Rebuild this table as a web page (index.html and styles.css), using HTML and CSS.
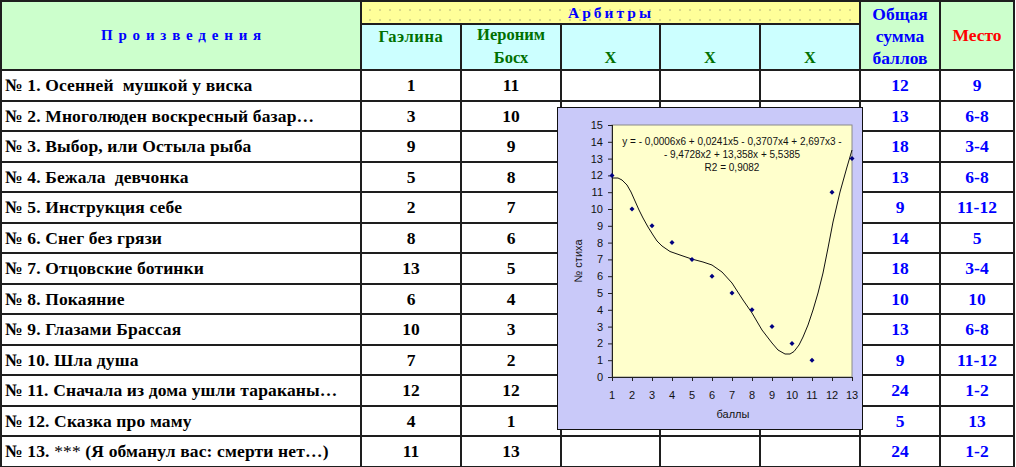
FILE: index.html
```html
<!DOCTYPE html>
<html lang="ru">
<head>
<meta charset="utf-8">
<title>Произведения</title>
<link rel="stylesheet" href="styles.css">
</head>
<body>
<div class="sheet">
  <div class="cell hd-green works">Произведения</div>
  <div class="cell hd-yellow arb">Арбитры</div>
  <div class="cell hd-green total">Общая<br>сумма<br>баллов</div>
  <div class="cell hd-green place">Место</div>
  <div class="cell hd-cyan judge top">Гаэлина</div>
  <div class="cell hd-cyan judge">Иероним<br>Босх</div>
  <div class="cell hd-cyan judge">X</div>
  <div class="cell hd-cyan judge">X</div>
  <div class="cell hd-cyan judge">X</div>

  <div class="cell name">№ 1. Осенней  мушкой у виска</div><div class="cell num">1</div><div class="cell num">11</div><div class="cell"></div><div class="cell"></div><div class="cell"></div><div class="cell blue">12</div><div class="cell blue">9</div>
  <div class="cell name">№ 2. Многолюден воскресный базар…</div><div class="cell num">3</div><div class="cell num">10</div><div class="cell"></div><div class="cell"></div><div class="cell"></div><div class="cell blue">13</div><div class="cell blue">6-8</div>
  <div class="cell name">№ 3. Выбор, или Остыла рыба</div><div class="cell num">9</div><div class="cell num">9</div><div class="cell"></div><div class="cell"></div><div class="cell"></div><div class="cell blue">18</div><div class="cell blue">3-4</div>
  <div class="cell name">№ 4. Бежала  девчонка</div><div class="cell num">5</div><div class="cell num">8</div><div class="cell"></div><div class="cell"></div><div class="cell"></div><div class="cell blue">13</div><div class="cell blue">6-8</div>
  <div class="cell name">№ 5. Инструкция себе</div><div class="cell num">2</div><div class="cell num">7</div><div class="cell"></div><div class="cell"></div><div class="cell"></div><div class="cell blue">9</div><div class="cell blue">11-12</div>
  <div class="cell name">№ 6. Снег без грязи</div><div class="cell num">8</div><div class="cell num">6</div><div class="cell"></div><div class="cell"></div><div class="cell"></div><div class="cell blue">14</div><div class="cell blue">5</div>
  <div class="cell name">№ 7. Отцовские ботинки</div><div class="cell num">13</div><div class="cell num">5</div><div class="cell"></div><div class="cell"></div><div class="cell"></div><div class="cell blue">18</div><div class="cell blue">3-4</div>
  <div class="cell name">№ 8. Покаяние</div><div class="cell num">6</div><div class="cell num">4</div><div class="cell"></div><div class="cell"></div><div class="cell"></div><div class="cell blue">10</div><div class="cell blue">10</div>
  <div class="cell name">№ 9. Глазами Брассая</div><div class="cell num">10</div><div class="cell num">3</div><div class="cell"></div><div class="cell"></div><div class="cell"></div><div class="cell blue">13</div><div class="cell blue">6-8</div>
  <div class="cell name">№ 10. Шла душа</div><div class="cell num">7</div><div class="cell num">2</div><div class="cell"></div><div class="cell"></div><div class="cell"></div><div class="cell blue">9</div><div class="cell blue">11-12</div>
  <div class="cell name">№ 11. Сначала из дома ушли тараканы…</div><div class="cell num">12</div><div class="cell num">12</div><div class="cell"></div><div class="cell"></div><div class="cell"></div><div class="cell blue">24</div><div class="cell blue">1-2</div>
  <div class="cell name">№ 12. Сказка про маму</div><div class="cell num">4</div><div class="cell num">1</div><div class="cell"></div><div class="cell"></div><div class="cell"></div><div class="cell blue">5</div><div class="cell blue">13</div>
  <div class="cell name">№ 13. <span class="light">***</span> (Я обманул вас: смерти нет…)</div><div class="cell num">11</div><div class="cell num">13</div><div class="cell"></div><div class="cell"></div><div class="cell"></div><div class="cell blue">24</div><div class="cell blue">1-2</div>

  <div class="chart">
    <svg width="306" height="323" viewBox="0 0 306 323" xmlns="http://www.w3.org/2000/svg">
      <rect x="0.5" y="0.5" width="305" height="322" fill="#c9c9f9" stroke="#111"/>
      <rect x="55" y="18" width="240" height="252" fill="#ffffcc" stroke="#8a8a8a" stroke-width="1"/>
      <g stroke="#222" stroke-width="1" fill="none">
        <path d="M55.5 18 V270.5 H295"/>
        <path d="M51 270.5h4M51 253.7h4M51 236.9h4M51 220.1h4M51 203.3h4M51 186.5h4M51 169.7h4M51 152.9h4M51 136.1h4M51 119.3h4M51 102.5h4M51 85.7h4M51 68.9h4M51 52.1h4M51 35.3h4M51 18.5h4"/>
        <path d="M55.5 270v4M75.5 270v4M95.5 270v4M115.5 270v4M135.5 270v4M155.5 270v4M175.5 270v4M195.5 270v4M215.5 270v4M235.5 270v4M255.5 270v4M275.5 270v4M295.5 270v4"/>
      </g>
      <g class="ax" text-anchor="end">
        <text x="46" y="274">0</text><text x="46" y="257.2">1</text><text x="46" y="240.4">2</text><text x="46" y="223.6">3</text><text x="46" y="206.8">4</text><text x="46" y="190">5</text><text x="46" y="173.2">6</text><text x="46" y="156.4">7</text><text x="46" y="139.6">8</text><text x="46" y="122.8">9</text><text x="46" y="106">10</text><text x="46" y="89.2">11</text><text x="46" y="72.4">12</text><text x="46" y="55.6">13</text><text x="46" y="38.8">14</text><text x="46" y="22">15</text>
      </g>
      <g class="ax" text-anchor="middle">
        <text x="55" y="292">1</text><text x="75" y="292">2</text><text x="95" y="292">3</text><text x="115" y="292">4</text><text x="135" y="292">5</text><text x="155" y="292">6</text><text x="175" y="292">7</text><text x="195" y="292">8</text><text x="215" y="292">9</text><text x="235" y="292">10</text><text x="255" y="292">11</text><text x="275" y="292">12</text><text x="295" y="292">13</text>
        <text x="176" y="311">баллы</text>
        <text transform="translate(25 154) rotate(-90)">№ стиха</text>
      </g>
      <g class="eq" text-anchor="middle">
        <text x="175" y="38" xml:space="preserve">y = - 0,0006x6 + 0,0241x5 - 0,3707x4 + 2,697x3 -</text>
        <text x="175" y="51" xml:space="preserve">- 9,4728x2 + 13,358x + 5,5385</text>
        <text x="175" y="64">R2 = 0,9082</text>
      </g>
      <polyline fill="none" stroke="#111" stroke-width="1" stroke-linejoin="round" points="55,71 61,71 65,73 70,78 74,85 78,94 82,103 86,111 91,120 96,128 100,134 105,139 113,144.5 123,148 134.7,152 146,155 155,158 165,165 175,176 186,193 195,206 205,223 215,236 221,243 228,247 233,247 237,244.5 242,238 246,230 251,218 256,203 261,186 266,166 271,141 276,115 283,85 290,60 295,43"/>
      <g fill="#000080">
        <path d="M55 65.9l2.5 2.5-2.5 2.5-2.5-2.5z"/>
        <path d="M75 99.5l2.5 2.5-2.5 2.5-2.5-2.5z"/>
        <path d="M95 116.3l2.5 2.5-2.5 2.5-2.5-2.5z"/>
        <path d="M115 133.1l2.5 2.5-2.5 2.5-2.5-2.5z"/>
        <path d="M135 149.9l2.5 2.5-2.5 2.5-2.5-2.5z"/>
        <path d="M155 166.7l2.5 2.5-2.5 2.5-2.5-2.5z"/>
        <path d="M175 183.5l2.5 2.5-2.5 2.5-2.5-2.5z"/>
        <path d="M195 200.3l2.5 2.5-2.5 2.5-2.5-2.5z"/>
        <path d="M215 217.1l2.5 2.5-2.5 2.5-2.5-2.5z"/>
        <path d="M235 233.9l2.5 2.5-2.5 2.5-2.5-2.5z"/>
        <path d="M255 250.7l2.5 2.5-2.5 2.5-2.5-2.5z"/>
        <path d="M275 82.7l2.5 2.5-2.5 2.5-2.5-2.5z"/>
        <path d="M295 49.1l2.5 2.5-2.5 2.5-2.5-2.5z"/>
      </g>
    </svg>
  </div>
</div>
</body>
</html>
```

FILE: styles.css
```css
html, body {
  margin: 0;
  padding: 0;
  background: #ffffff;
}

.sheet {
  position: relative;
  display: grid;
  grid-template-columns: 358px 98px 98px 97px 98px 98px 78px 72px;
  grid-template-rows: 21px 44px 29px 28px 29px 28px 29px 28px 29px 28px 29px 28px 29px 28px 29px;
  gap: 2px;
  padding: 2px;
  width: max-content;
  background: #1e1e1e;
  font-family: "Liberation Serif", "Times New Roman", serif;
  font-weight: bold;
  font-size: 17.5px;
  color: #000;
}

.cell {
  background: #ffffff;
  display: flex;
  align-items: center;
  justify-content: center;
  white-space: pre;
  overflow: hidden;
}

.hd-green {
  background-color: #ccffcc;
}

.hd-yellow {
  background-color: #ffff99;
  background-image: radial-gradient(circle, #d9d98a 0.7px, transparent 1.1px);
  background-size: 10px 10px;
  background-position: 3px 3px;
}

.hd-cyan {
  background-color: #ccffff;
}

.works {
  grid-row: 1 / span 2;
  color: #0000ff;
  font-size: 15px;
  letter-spacing: 5.8px;
  padding-left: 6px;
}

.arb {
  grid-column: 2 / span 5;
  color: #0000ff;
  font-size: 15.5px;
  letter-spacing: 3px;
  padding-left: 1px;
}

.total {
  grid-column: 7;
  grid-row: 1 / span 2;
  color: #0000ff;
  font-size: 17.5px;
  line-height: 22px;
  text-align: center;
  white-space: normal;
}

.place {
  grid-column: 8;
  grid-row: 1 / span 2;
  color: #ff0000;
  font-size: 17.5px;
}

.judge {
  color: #007000;
  font-size: 16.5px;
  line-height: 23px;
  text-align: center;
  align-items: flex-end;
  white-space: normal;
}

.judge.top {
  align-items: flex-start;
  letter-spacing: 0.6px;
}

.name {
  justify-content: flex-start;
  padding-left: 3px;
  letter-spacing: 0.15px;
}

.light {
  font-weight: normal;
}

.blue {
  color: #0000ff;
}

.chart {
  position: absolute;
  left: 557px;
  top: 107px;
  width: 306px;
  height: 323px;
}

.chart svg {
  display: block;
}

.ax text, .ax {
  font-family: "Liberation Sans", Arial, sans-serif;
  font-weight: normal;
  font-size: 11px;
  fill: #111;
}

.eq {
  font-family: "Liberation Sans", Arial, sans-serif;
  font-weight: normal;
  font-size: 10px;
  fill: #111;
}
```
